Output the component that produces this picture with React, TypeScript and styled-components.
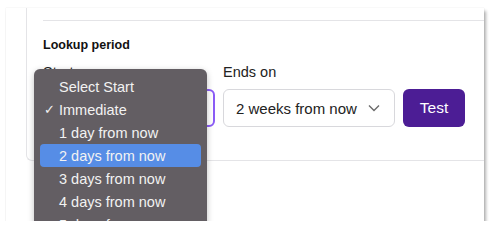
import React from "react";
import styled, { createGlobalStyle } from "styled-components";

const Global = createGlobalStyle`
  html, body { margin: 0; padding: 0; background: #ffffff; }
  body { font-family: "Liberation Sans", Arial, sans-serif; }
`;

const Window = styled.div`
  position: relative;
  margin: 8px 0 0 6px;
  width: 478px;
  height: 213px;
  background: #ffffff;
  overflow: hidden;
  box-shadow: 2px 3px 3px rgba(0, 0, 0, 0.3), 0 0 1px rgba(0, 0, 0, 0.15);
`;

const Card = styled.div`
  margin-left: 20px;
  width: 480px;
  height: 153px;
  box-sizing: border-box;
  border-left: 1px solid #e4e4e7;
  border-bottom: 1px solid #e4e4e7;
  border-bottom-left-radius: 6px;
  padding: 12px 0 0 16px;
`;

const Divider = styled.div`
  height: 1px;
  background: #e4e4e7;
`;

const SectionTitle = styled.div`
  margin-top: 17px;
  font-size: 12.5px;
  font-weight: 700;
  color: #111111;
  line-height: 15px;
`;

const Row = styled.div`
  margin-top: 10px;
  display: flex;
  align-items: flex-end;
  gap: 8px;
`;

const Field = styled.div`
  display: flex;
  flex-direction: column;
  gap: 8px;
`;

const Label = styled.div`
  font-size: 14.5px;
  color: #222222;
  line-height: 18px;
`;

const SelectBox = styled.div<{ $focused?: boolean }>`
  width: 172px;
  height: 38px;
  box-sizing: border-box;
  border-radius: 6px;
  border: ${(p) => (p.$focused ? "2px solid #8b5cf6" : "1px solid #d8d8dc")};
  display: flex;
  align-items: center;
  justify-content: space-between;
  padding: 0 14px 0 12px;
  font-size: 15px;
  color: #222222;
`;

const Button = styled.button`
  width: 62px;
  height: 38px;
  border: none;
  border-radius: 6px;
  background: #4c1d95;
  color: #ffffff;
  font-family: "Liberation Sans", Arial, sans-serif;
  font-size: 15.5px;
  padding: 0;
`;

const Menu = styled.div`
  position: absolute;
  left: 28px;
  top: 61px;
  width: 173px;
  height: 200px;
  background: #635e63;
  border-radius: 6px;
  padding: 6px 6px 0 6px;
  box-sizing: border-box;
  box-shadow: 0 2px 6px rgba(0, 0, 0, 0.25);
  display: flex;
  flex-direction: column;
`;

const Item = styled.div<{ $active?: boolean }>`
  height: 23px;
  border-radius: 4px;
  display: flex;
  align-items: center;
  font-size: 14.5px;
  color: #f2f2f2;
  background: ${(p) => (p.$active ? "#568de6" : "transparent")};
  padding-left: 19px;
  position: relative;
`;

const Check = styled.span`
  position: absolute;
  left: 4px;
  font-size: 13px;
`;

const items = [
  "Select Start",
  "Immediate",
  "1 day from now",
  "2 days from now",
  "3 days from now",
  "4 days from now",
  "5 days from now",
];

export default function App() {
  return (
    <>
      <Global />
      <Window>
        <Card>
          <Divider />
          <SectionTitle>Lookup period</SectionTitle>
          <Row>
            <Field>
              <Label>Start on</Label>
              <SelectBox $focused>
                <span>Immediate</span>
              </SelectBox>
            </Field>
            <Field>
              <Label>Ends on</Label>
              <SelectBox>
                <span>2 weeks from now</span>
                <svg width="12" height="8" viewBox="0 0 12 8">
                  <path d="M1 1.5 L6 6.5 L11 1.5" fill="none" stroke="#6b6b6b" strokeWidth="1.4" />
                </svg>
              </SelectBox>
            </Field>
            <Button>Test</Button>
          </Row>
        </Card>
        <Menu>
          {items.map((t, i) => (
            <Item key={t} $active={i === 3}>
              {i === 1 && <Check>✓</Check>}
              {t}
            </Item>
          ))}
        </Menu>
      </Window>
    </>
  );
}
